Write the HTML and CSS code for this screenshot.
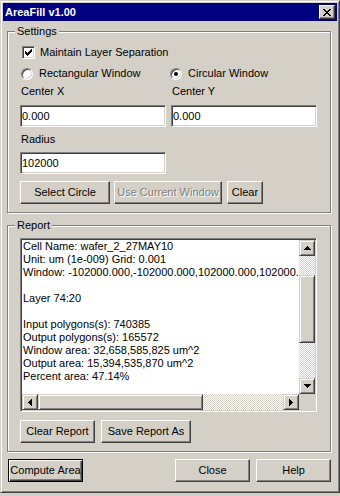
FILE: index.html
```html
<!DOCTYPE html>
<html lang="en">
<head>
    <meta charset="UTF-8">
    <meta name="viewport" content="width=device-width, initial-scale=1.0">
    <title>AreaFill v1.00</title>
    <link rel="stylesheet" href="styles.css">
</head>
<body>
    <div class="window">
        <div class="titlebar">
            <span class="title">AreaFill v1.00</span>
            <span class="close-btn">
                <svg width="8" height="7" viewBox="0 0 8 7" shape-rendering="crispEdges">
                    <path d="M0 0h2v1h-2z M6 0h2v1h-2z M1 1h2v1h-2z M5 1h2v1h-2z M2 2h4v1h-4z M3 3h2v1h-2z M2 4h4v1h-4z M1 5h2v1h-2z M5 5h2v1h-2z M0 6h2v1h-2z M6 6h2v1h-2z" fill="#000"/>
                </svg>
            </span>
        </div>

        <div class="content">
            <fieldset class="group settings">
                <legend>Settings</legend>

                <div class="check-row">
                    <span class="checkbox">
                        <svg width="7" height="7" viewBox="0 0 7 7" shape-rendering="crispEdges">
                            <path d="M6 0h1v1h-1z M5 1h2v1h-2z M0 2h1v1h-1z M4 2h3v1h-3z M0 3h2v1h-2z M3 3h3v1h-3z M0 4h5v1h-5z M1 5h3v1h-3z M2 6h1v1h-1z" fill="#000"/>
                        </svg>
                    </span>
                    <span>Maintain Layer Separation</span>
                </div>

                <div class="radio-row">
                    <div class="radio-opt"><span class="radio"></span><span>Rectangular Window</span></div>
                    <div class="radio-opt"><span class="radio checked"></span><span>Circular Window</span></div>
                </div>

                <div class="field-row">
                    <div class="field">
                        <div class="field-label">Center X</div>
                        <input class="textbox" type="text" value="0.000">
                    </div>
                    <div class="field">
                        <div class="field-label">Center Y</div>
                        <input class="textbox" type="text" value="0.000">
                    </div>
                </div>

                <div class="field radius">
                    <div class="field-label">Radius</div>
                    <input class="textbox" type="text" value="102000">
                </div>

                <div class="btn-row">
                    <button class="btn btn-select">Select Circle</button>
                    <button class="btn btn-window" disabled>Use Current Window</button>
                    <button class="btn btn-clear">Clear</button>
                </div>
            </fieldset>

            <fieldset class="group report">
                <legend>Report</legend>

                <div class="report-box">
                    <div class="report-text">Cell Name: wafer_2_27MAY10
Unit: um (1e-009) Grid: 0.001
Window: -102000.000,-102000.000,102000.000,102000.000

Layer 74:20

Input polygons(s): 740385
Output polygons(s): 165572
Window area: 32,658,585,825 um^2
Output area: 15,394,535,870 um^2
Percent area: 47.14%</div>

                    <div class="vscroll">
                        <div class="sb-btn">
                            <svg width="7" height="4" viewBox="0 0 7 4" shape-rendering="crispEdges"><path d="M3 0h1v1h-1z M2 1h3v1h-3z M1 2h5v1h-5z M0 3h7v1h-7z" fill="#000"/></svg>
                        </div>
                        <div class="sb-track">
                            <div class="vthumb"></div>
                        </div>
                        <div class="sb-btn">
                            <svg width="7" height="4" viewBox="0 0 7 4" shape-rendering="crispEdges"><path d="M0 0h7v1h-7z M1 1h5v1h-5z M2 2h3v1h-3z M3 3h1v1h-1z" fill="#000"/></svg>
                        </div>
                    </div>

                    <div class="hscroll">
                        <div class="sb-btn">
                            <svg width="4" height="7" viewBox="0 0 4 7" shape-rendering="crispEdges"><path d="M3 0h1v7h-1z M2 1h1v5h-1z M1 2h1v3h-1z M0 3h1v1h-1z" fill="#000"/></svg>
                        </div>
                        <div class="sb-track">
                            <div class="hthumb"></div>
                        </div>
                        <div class="sb-btn">
                            <svg width="4" height="7" viewBox="0 0 4 7" shape-rendering="crispEdges"><path d="M0 0h1v7h-1z M1 1h1v5h-1z M2 2h1v3h-1z M3 3h1v1h-1z" fill="#000"/></svg>
                        </div>
                    </div>

                    <div class="sb-corner"></div>
                </div>

                <div class="btn-row report-btns">
                    <button class="btn btn-report">Clear Report</button>
                    <button class="btn btn-save">Save Report As</button>
                </div>
            </fieldset>

            <div class="bottom-row">
                <button class="btn btn-default">Compute Area</button>
                <div class="bottom-right">
                    <button class="btn btn-wide">Close</button>
                    <button class="btn btn-wide">Help</button>
                </div>
            </div>
        </div>
    </div>
</body>
</html>
```

FILE: styles.css
```css
* {
    box-sizing: border-box;
}
body {
    margin: 0;
    background: #d4d0c8;
    font-family: "Liberation Sans", Arial, sans-serif;
    font-size: 11px;
    line-height: 13px;
    color: #000;
}

/* window frame, classic 3d border */
.window {
    width: 340px;
    height: 493px;
    border: 1px solid;
    border-color: #d4d0c8 #404040 #404040 #d4d0c8;
    box-shadow: inset 1px 1px #fff, inset -1px -1px #808080;
    padding: 2px;
    background: #d4d0c8;
}
.titlebar {
    height: 18px;
    background: #000080;
    color: #fff;
    font-weight: bold;
    display: flex;
    align-items: center;
    justify-content: space-between;
    padding: 0 2px 0 2px;
}
.close-btn {
    width: 16px;
    height: 14px;
    display: flex;
    align-items: center;
    justify-content: center;
    background: #d4d0c8;
    border: 1px solid;
    border-color: #fff #404040 #404040 #fff;
    box-shadow: inset -1px -1px #808080;
}

.content {
    padding: 4px 6px 0 4px;
}

/* group boxes */
.group {
    margin: 0;
    min-width: 0;
    padding: 8px 12px 8px 12px;
    border: 1px solid #808080;
    box-shadow: inset 1px 1px #fff, 1px 1px #fff;
}
.group legend {
    margin-left: -5px;
    padding: 0 2px;
    line-height: 13px;
    background: #d4d0c8;
}
.report {
    margin-top: 6px;
    padding-top: 6px;
}

/* checkbox + radios */
.check-row {
    display: flex;
    align-items: center;
    height: 13px;
    gap: 5px;
}
.checkbox {
    width: 13px;
    height: 13px;
    margin-left: 2px;
    display: flex;
    align-items: center;
    justify-content: center;
    background: #fff;
    border: 1px solid;
    border-color: #808080 #fff #fff #808080;
    box-shadow: inset 1px 1px #404040, inset -1px -1px #d4d0c8;
}
.radio-row {
    display: flex;
    margin-top: 8px;
}
.radio-opt {
    width: 151px;
    height: 13px;
    display: flex;
    align-items: center;
    gap: 6px;
}
.radio {
    width: 12px;
    height: 12px;
    margin-left: 1px;
    border-radius: 50%;
    background: #fff;
    border: 1px solid;
    border-color: #808080 #fff #fff #808080;
    box-shadow: inset 1px 1px #404040, inset -1px -1px #d4d0c8;
    display: flex;
    align-items: center;
    justify-content: center;
}
.radio.checked::after {
    content: "";
    width: 4px;
    height: 4px;
    border-radius: 50%;
    background: #000;
}

/* text fields */
.field-row {
    display: flex;
    gap: 5px;
    margin-top: 5px;
}
.field {
    width: 146px;
}
.field-label {
    margin-left: 1px;
    height: 13px;
}
.textbox {
    display: block;
    width: 146px;
    height: 22px;
    margin: 7px 0 0 0;
    padding: 0 1px;
    font: inherit;
    color: #000;
    background: #fff;
    border: 1px solid;
    border-color: #808080 #fff #fff #808080;
    box-shadow: inset 1px 1px #404040, inset -1px -1px #d4d0c8;
    outline: none;
}
.radius {
    margin-top: 6px;
}
.radius .textbox {
    margin-top: 6px;
}

/* buttons */
.btn {
    height: 23px;
    padding: 0;
    font: inherit;
    color: #000;
    background: #d4d0c8;
    border: 1px solid;
    border-color: #fff #404040 #404040 #fff;
    box-shadow: inset -1px -1px #808080;
}
.btn:disabled {
    color: #808080;
    text-shadow: 1px 1px #fff;
}
.btn-row {
    display: flex;
    margin-top: 7px;
}
.btn-select { width: 90px; }
.btn-window { width: 108px; margin-left: 4px; }
.btn-clear { width: 36px; margin-left: 5px; }
.report-btns {
    margin-top: 8px;
    gap: 6px;
}
.btn-report { width: 75px; }
.btn-save { width: 90px; }

.bottom-row {
    display: flex;
    justify-content: space-between;
    margin-top: 7px;
    padding-left: 1px;
}
.bottom-right {
    display: flex;
    gap: 6px;
}
.btn-wide { width: 75px; }
.btn-default {
    width: 75px;
    border: 1px solid #000;
    box-shadow: inset 1px 1px #fff, inset -1px -1px #404040, inset -2px -2px #808080;
}

/* report box with scrollbars */
.report-box {
    width: 297px;
    height: 174px;
    display: grid;
    grid-template-columns: 1fr 16px;
    grid-template-rows: 1fr 16px;
    background: #fff;
    border: 1px solid;
    border-color: #808080 #fff #fff #808080;
    box-shadow: inset 1px 1px #404040, inset -1px -1px #d4d0c8;
    padding: 1px;
}
.report-text {
    white-space: pre;
    overflow: hidden;
    padding-left: 1px;
}
.vscroll {
    display: flex;
    flex-direction: column;
}
.hscroll {
    display: flex;
}
.sb-btn {
    width: 16px;
    height: 16px;
    flex: none;
    display: flex;
    align-items: center;
    justify-content: center;
    background: #d4d0c8;
    border: 1px solid;
    border-color: #d4d0c8 #404040 #404040 #d4d0c8;
    box-shadow: inset 1px 1px #fff, inset -1px -1px #808080;
}
.sb-track {
    flex: 1;
    background: repeating-conic-gradient(#fff 0 25%, #d4d0c8 0 50%) 0 0 / 2px 2px;
}
.vthumb {
    height: 68px;
    margin-top: 19px;
    background: #d4d0c8;
    border: 1px solid;
    border-color: #d4d0c8 #404040 #404040 #d4d0c8;
    box-shadow: inset 1px 1px #fff, inset -1px -1px #808080;
}
.hscroll .sb-track {
    display: flex;
}
.hthumb {
    width: 165px;
    height: 100%;
    background: #d4d0c8;
    border: 1px solid;
    border-color: #d4d0c8 #404040 #404040 #d4d0c8;
    box-shadow: inset 1px 1px #fff, inset -1px -1px #808080;
}
.sb-corner {
    background: #d4d0c8;
}
```
